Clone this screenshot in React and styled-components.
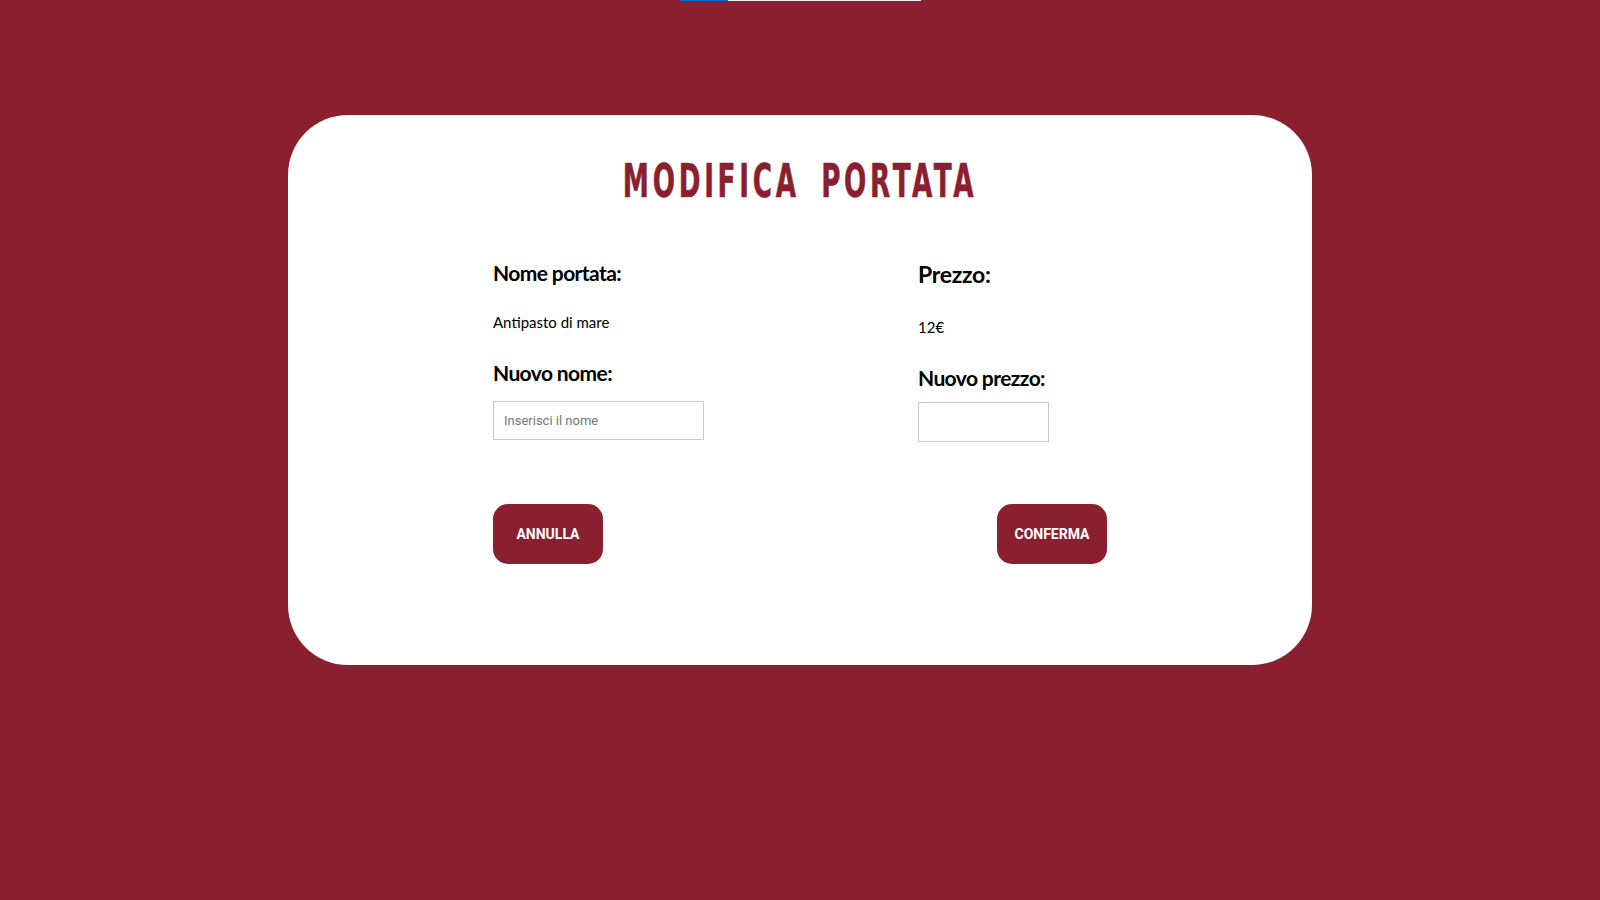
import React from 'react'
import styled, { createGlobalStyle } from 'styled-components'

const wine = '#8a1f30'

const GlobalStyle = createGlobalStyle`
  html, body {
    margin: 0;
    padding: 0;
    background-color: ${wine};
  }
  body {
    font-family: Lato, "Liberation Sans", sans-serif;
    min-height: 100vh;
  }
`

const Page = styled.div`
  min-height: 100vh;
  display: flex;
  flex-direction: column;
  align-items: center;
`

const LoadBar = styled.div`
  width: 241px;
  height: 1px;
  display: flex;
  background-color: #eeeeee;

  span {
    width: 48px;
    background-color: #0b6bd1;
  }
`

const Card = styled.div`
  width: 1024px;
  margin-top: 114px;
  padding: 42px 0 101px;
  box-sizing: border-box;
  background-color: #fff;
  border-radius: 60px;
`

const Title = styled.h1`
  margin: 0;
  text-align: center;
  font-family: "Liberation Sans Narrow", "DejaVu Sans Condensed", sans-serif;
  font-weight: 700;
  font-size: 47px;
  line-height: 47px;
  letter-spacing: 6px;
  word-spacing: 14px;
  text-transform: uppercase;
  color: ${wine};
  -webkit-text-stroke: 0.6px ${wine};
  transform: scaleX(0.62);
`

const Form = styled.form`
  width: 614px;
  margin: 55px auto 0;
`

const Columns = styled.div`
  display: grid;
  grid-template-columns: 425px 1fr;
  align-items: start;
`

const Column = styled.div`
  display: flex;
  flex-direction: column;
  align-items: flex-start;
`

const Label = styled.h3`
  margin: ${p => p.$mt || 0}px 0 0;
  font-size: ${p => p.$size || 21}px;
  font-weight: 700;
  line-height: 1.2;
  letter-spacing: ${p => p.$ls ?? -0.6}px;
  color: #000;
`

const Value = styled.p`
  margin: ${p => p.$mt || 0}px 0 0;
  font-size: 15px;
  line-height: 1.2;
  color: #000;
`

const Input = styled.input`
  margin-top: ${p => p.$mt || 0}px;
  width: ${p => p.$w}px;
  height: ${p => p.$h}px;
  box-sizing: border-box;
  padding: 0 10px;
  border: 1px solid #c8c8c8;
  border-radius: 0;
  font-family: Roboto, "Liberation Sans", sans-serif;
  font-size: 13px;
  color: #222;
  outline: none;

  &::placeholder {
    color: #757575;
  }
`

const Actions = styled.div`
  margin-top: 62px;
  display: flex;
  justify-content: space-between;
`

const Button = styled.button`
  width: 110px;
  height: 60px;
  border: none;
  border-radius: 15px;
  background-color: ${wine};
  color: #fff;
  font-family: Roboto, "Liberation Sans", sans-serif;
  font-weight: 700;
  font-size: 14px;
  text-transform: uppercase;
  cursor: pointer;
`

export default function App() {
  return (
    <>
      <GlobalStyle />
      <Page>
        <LoadBar><span /></LoadBar>
        <Card>
          <Title>Modifica Portata</Title>
          <Form onSubmit={e => e.preventDefault()}>
            <Columns>
              <Column>
                <Label $mt={1}>Nome portata:</Label>
                <Value $mt={28}>Antipasto di mare</Value>
                <Label $mt={29}>Nuovo nome:</Label>
                <Input $mt={16} $w={211} $h={39} type="text" placeholder="Inserisci il nome" />
              </Column>
              <Column>
                <Label $size={23} $ls={-0.3} $mt={2}>Prezzo:</Label>
                <Value $mt={29}>12€</Value>
                <Label $mt={29}>Nuovo prezzo:</Label>
                <Input $mt={12} $w={131} $h={40} type="text" />
              </Column>
            </Columns>
            <Actions>
              <Button type="button">Annulla</Button>
              <Button type="submit">Conferma</Button>
            </Actions>
          </Form>
        </Card>
      </Page>
    </>
  )
}
